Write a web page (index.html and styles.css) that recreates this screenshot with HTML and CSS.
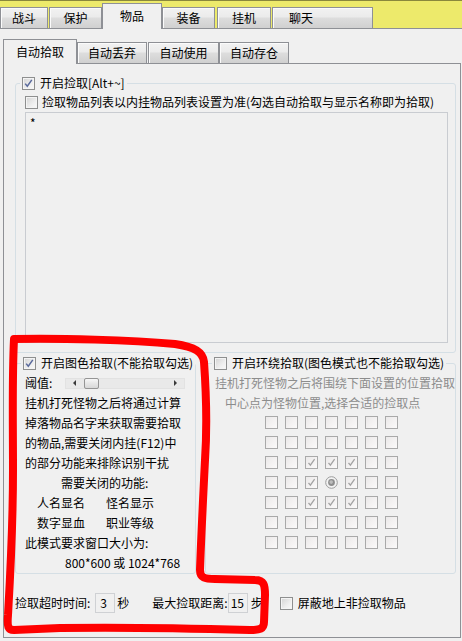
FILE: index.html
```html
<!DOCTYPE html>
<html lang="zh-CN">
<head>
<meta charset="utf-8">
<title>物品</title>
<link rel="stylesheet" href="styles.css">
</head>
<body>
<div class="tabbar">
  <div class="tab tab-fight">战斗</div>
  <div class="tab tab-guard">保护</div>
  <div class="tab tab-items active">物品</div>
  <div class="tab tab-equip">装备</div>
  <div class="tab tab-idle">挂机</div>
  <div class="tab tab-chat">聊天</div>
</div>

<div class="subtabs">
  <div class="stab stab-pick active">自动拾取</div>
  <div class="stab stab-drop">自动丢弃</div>
  <div class="stab stab-use">自动使用</div>
  <div class="stab stab-store">自动存仓</div>
</div>

<div class="subpage">
  <div class="group group-pick">
    <div class="legend legend-pick">
      <span class="cb on"><svg viewBox="0 0 13 13" width="13" height="13"><path d="M3.2 6.6 L5.3 9.3 L9.8 2.9" fill="none" stroke="#5a6a9c" stroke-width="1.5"/></svg></span>
      <span>开启捡取[Alt+~]</span>
    </div>
    <div class="row row-list">
      <span class="cb"></span>
      <span>捡取物品列表以内挂物品列表设置为准(勾选自动拾取与显示名称即为拾取)</span>
    </div>
    <div class="textbox">*</div>
  </div>

  <div class="groups">
    <div class="group group-color">
      <div class="legend legend-color">
        <span class="cb on"><svg viewBox="0 0 13 13" width="13" height="13"><path d="M3.2 6.6 L5.3 9.3 L9.8 2.9" fill="none" stroke="#5a6a9c" stroke-width="1.5"/></svg></span>
        <span>开启图色拾取(不能拾取勾选)</span>
      </div>
      <div class="line threshold">
        <span>阈值:</span>
        <div class="slider">
          <span class="arrow arrow-left"></span>
          <span class="thumb"></span>
          <span class="track"></span>
          <span class="arrow arrow-right"></span>
        </div>
      </div>
      <div class="line">挂机打死怪物之后将通过计算</div>
      <div class="line">掉落物品名字来获取需要拾取</div>
      <div class="line">的物品,需要关闭内挂(F12)中</div>
      <div class="line">的部分功能来排除识别干扰</div>
      <div class="line indent-need">需要关闭的功能:</div>
      <div class="line pair"><span>人名显名</span><span>怪名显示</span></div>
      <div class="line pair"><span>数字显血</span><span>职业等级</span></div>
      <div class="line">此模式要求窗口大小为:</div>
      <div class="line indent-size">800*600 或 1024*768</div>
    </div>

    <div class="group group-around">
      <div class="legend legend-around">
        <span class="cb"></span>
        <span>开启环绕拾取(图色模式也不能拾取勾选)</span>
      </div>
      <div class="line dis">挂机打死怪物之后将围绕下面设置的位置拾取</div>
      <div class="line dis indent-center">中心点为怪物位置,选择合适的捡取点</div>
      <div class="grid">
        <span class="gcb"></span><span class="gcb"></span><span class="gcb"></span><span class="gcb"></span><span class="gcb"></span><span class="gcb"></span><span class="gcb"></span>
        <span class="gcb"></span><span class="gcb"></span><span class="gcb"></span><span class="gcb"></span><span class="gcb"></span><span class="gcb"></span><span class="gcb"></span>
        <span class="gcb"></span><span class="gcb"></span>
        <span class="gcb"><svg viewBox="0 0 13 13" width="13" height="13"><path d="M3.5 6.8 L5.4 9.2 L9.6 3.2" fill="none" stroke="#a3a3a3" stroke-width="1.3"/></svg></span>
        <span class="gcb"><svg viewBox="0 0 13 13" width="13" height="13"><path d="M3.5 6.8 L5.4 9.2 L9.6 3.2" fill="none" stroke="#a3a3a3" stroke-width="1.3"/></svg></span>
        <span class="gcb"><svg viewBox="0 0 13 13" width="13" height="13"><path d="M3.5 6.8 L5.4 9.2 L9.6 3.2" fill="none" stroke="#a3a3a3" stroke-width="1.3"/></svg></span>
        <span class="gcb"></span><span class="gcb"></span>
        <span class="gcb"></span><span class="gcb"></span>
        <span class="gcb"><svg viewBox="0 0 13 13" width="13" height="13"><path d="M3.5 6.8 L5.4 9.2 L9.6 3.2" fill="none" stroke="#a3a3a3" stroke-width="1.3"/></svg></span>
        <span class="radio"><svg viewBox="0 0 13 13" width="13" height="13"><circle cx="6.5" cy="6.5" r="5.8" fill="#f3f3f3" stroke="#9c9c9c" stroke-width="1"/><circle cx="6.5" cy="6.5" r="3.4" fill="#8e8e8e"/><circle cx="6.2" cy="6.1" r="1.8" fill="#bdbdbd"/></svg></span>
        <span class="gcb"><svg viewBox="0 0 13 13" width="13" height="13"><path d="M3.5 6.8 L5.4 9.2 L9.6 3.2" fill="none" stroke="#a3a3a3" stroke-width="1.3"/></svg></span>
        <span class="gcb"></span><span class="gcb"></span>
        <span class="gcb"></span><span class="gcb"></span>
        <span class="gcb"><svg viewBox="0 0 13 13" width="13" height="13"><path d="M3.5 6.8 L5.4 9.2 L9.6 3.2" fill="none" stroke="#a3a3a3" stroke-width="1.3"/></svg></span>
        <span class="gcb"><svg viewBox="0 0 13 13" width="13" height="13"><path d="M3.5 6.8 L5.4 9.2 L9.6 3.2" fill="none" stroke="#a3a3a3" stroke-width="1.3"/></svg></span>
        <span class="gcb"><svg viewBox="0 0 13 13" width="13" height="13"><path d="M3.5 6.8 L5.4 9.2 L9.6 3.2" fill="none" stroke="#a3a3a3" stroke-width="1.3"/></svg></span>
        <span class="gcb"></span><span class="gcb"></span>
        <span class="gcb"></span><span class="gcb"></span><span class="gcb"></span><span class="gcb"></span><span class="gcb"></span><span class="gcb"></span><span class="gcb"></span>
        <span class="gcb"></span><span class="gcb"></span><span class="gcb"></span><span class="gcb"></span><span class="gcb"></span><span class="gcb"></span><span class="gcb"></span>
      </div>
    </div>
  </div>

  <div class="bottom">
    <span>捡取超时时间:</span>
    <span class="num num-time">3</span>
    <span class="unit">秒</span>
    <span class="dist-label">最大捡取距离:</span>
    <span class="num num-dist">15</span>
    <span class="unit unit-step">步</span>
    <span class="cb cb-hide"></span>
    <span class="hide-label">屏蔽地上非捡取物品</span>
  </div>
</div>

<svg class="scribble" viewBox="0 0 462 641" width="462" height="641">
  <path d="M14 339 C60 338 130 340 175 344 C195 347 203 352 204 362 C206 390 207 430 205 460 C203 500 201 540 200 570 C200 578 205 579 215 579 L255 580 C264 580 265 585 265 595 L264 622 C264 629 260 630 250 630 C180 628 120 627 60 628 L14 630 C8 630 7 627 8 615 C10 580 13 530 13 470 C13 420 12 380 14 339 Z" fill="none" stroke="#ff0000" stroke-width="8" stroke-linejoin="round" stroke-linecap="round"/>
</svg>
</body>
</html>
```

FILE: styles.css
```css
* { box-sizing: border-box; margin: 0; padding: 0; }

html, body { width: 462px; height: 641px; }

body {
  background: #f0f0f0;
  font-family: "Noto Sans CJK SC", "Microsoft YaHei", sans-serif;
  font-size: 12px;
  line-height: 16px;
  color: #000;
  position: relative;
  overflow: hidden;
}

/* ---- top tab strip ---- */
.tabbar {
  display: flex;
  align-items: flex-end;
  height: 29px;
  background: #edea6b;
  border-top: 1px solid #8a883c;
  border-bottom: 1px solid #8e9095;
}

.tab {
  height: 21px;
  display: flex;
  align-items: center;
  justify-content: center;
  border: 1px solid #8e9095;
  border-bottom: none;
  background: linear-gradient(#f2f2f2, #ebebeb 45%, #dddddd 50%, #d0d0d0);
  box-shadow: inset 1px 1px 0 #fbfbfb;
}

.tab.active {
  height: 26px;
  margin-bottom: -1px;
  padding-bottom: 2px;
  background: #f0f0f0;
  box-shadow: none;
  position: relative;
  z-index: 1;
}

.tab-fight { width: 48px; }
.tab-guard { width: 53px; margin-left: 1px; }
.tab-items { width: 60px; }
.tab-equip { width: 53px; }
.tab-idle  { width: 54px; margin-left: 2px; }
.tab-chat  { width: 101px; margin-left: 1px; justify-content: flex-start; padding-left: 16px; }

/* ---- sub tabs ---- */
.subtabs {
  display: flex;
  align-items: flex-end;
  height: 24px;
  margin: 10px 0 0 3px;
}

.stab {
  height: 21px;
  display: flex;
  align-items: center;
  justify-content: center;
  border: 1px solid #8e9095;
  border-bottom: none;
  background: linear-gradient(#f2f2f2, #ebebeb 45%, #dddddd 50%, #d0d0d0);
  box-shadow: inset 1px 1px 0 #fbfbfb;
}

.stab.active {
  height: 25px;
  margin-bottom: -1px;
  padding-bottom: 1px;
  background: #f0f0f0;
  box-shadow: none;
  position: relative;
  z-index: 1;
}

.stab-pick  { width: 74px; }
.stab-drop  { width: 70px; }
.stab-use   { width: 71px; margin-left: 1px; }
.stab-store { width: 70px; }

.subpage {
  width: 458px;
  height: 575px;
  margin-left: 3px;
  border: 1px solid #8e9095;
  padding: 0 4px 0 11px;
}

/* ---- group boxes ---- */
.group {
  border: 1px solid #d5dfe5;
  border-radius: 3px;
}

.legend {
  display: flex;
  align-items: center;
  gap: 5px;
  width: max-content;
  height: 16px;
  margin: -9px 0 0 4px;
  padding: 0 2px;
  background: #f0f0f0;
  white-space: nowrap;
}

.legend-color { margin-left: 5px; }
.legend-around { margin-left: 6px; }

.cb {
  display: block;
  flex: none;
  width: 13px;
  height: 13px;
  border: 1px solid #8e8f8f;
  background: linear-gradient(135deg, #d3d3d3, #eeeeee 60%, #fafafa);
  box-shadow: inset 0 0 0 1px #f4f4f4;
}

.cb svg {
  display: block;
  margin: -1px;
}

.group-pick {
  margin-top: 19px;
  padding-bottom: 9px;
}

.row {
  display: flex;
  align-items: center;
  gap: 4px;
  height: 16px;
  margin: 3px 0 0 9px;
  white-space: nowrap;
}

.textbox {
  height: 231px;
  margin: 2px 7px 0 9px;
  padding: 2px 4px;
  border: 1px solid #c9ccd1;
  background: #f0f0f0;
}

.groups {
  display: flex;
  gap: 9px;
  margin-top: 10px;
}

.group-color {
  width: 181px;
  height: 211px;
}

.group-around {
  width: 251px;
  height: 211px;
}

.line {
  height: 20px;
  line-height: 20px;
  padding-left: 9px;
  white-space: nowrap;
}

.threshold {
  margin-top: 2px;
  display: flex;
  align-items: center;
}

.group-around .legend + .line { margin-top: 2px; }

.dis { color: #8c8c8c; }

.indent-need { padding-left: 45px; }
.indent-size { padding-left: 49px; }
.indent-center { padding-left: 19px; }

.pair {
  display: flex;
  gap: 21px;
  padding-left: 21px;
}

/* slider */
.slider {
  display: flex;
  align-items: center;
  width: 120px;
  height: 11px;
  margin-left: 13px;
  background: #e9e9e9;
  border: 1px solid #e2e2e2;
}

.arrow {
  flex: none;
  width: 17px;
  height: 9px;
  display: flex;
  align-items: center;
  justify-content: center;
}

.arrow::before {
  content: "";
  display: block;
  border-top: 3px solid transparent;
  border-bottom: 3px solid transparent;
}

.arrow-left::before { border-right: 3px solid #3a3a3a; }
.arrow-right::before { border-left: 3px solid #3a3a3a; }

.thumb {
  flex: none;
  width: 15px;
  height: 11px;
  margin-left: 1px;
  border: 1px solid #959595;
  border-radius: 2px;
  background: linear-gradient(#f7f7f7, #e6e6e6 50%, #d8d8d8);
}

.track { flex: 1; }

/* grid of positions */
.grid {
  display: grid;
  grid-template-columns: repeat(7, 13px);
  grid-auto-rows: 13px;
  gap: 7px;
  margin: 3px 0 0 59px;
}

.gcb {
  display: block;
  width: 13px;
  height: 13px;
  border: 1px solid #a9a9a9;
  background: linear-gradient(135deg, #ebe9e9, #f4f2f2 55%, #fbfafa);
}

.gcb svg { display: block; margin: -1px; }

.radio { display: block; width: 13px; height: 13px; }
.radio svg { display: block; }

/* bottom row */
.bottom {
  display: flex;
  align-items: center;
  height: 20px;
  margin-top: 19px;
  white-space: nowrap;
}

.num {
  display: block;
  width: 20px;
  height: 20px;
  line-height: 18px;
  padding-left: 4px;
  border: 1px solid #cfd1d4;
  background: #f0f0f0;
}

.num-time { margin-left: 5px; }
.num-dist { padding-left: 2px; }

.unit { margin-left: 2px; }
.unit-step { margin-left: 3px; }
.dist-label { margin-left: 23px; }
.cb-hide { margin-left: 17px; }
.hide-label { margin-left: 5px; }

/* hand-drawn red annotation lying over the form */
.scribble {
  position: absolute;
  left: 0;
  top: 0;
  pointer-events: none;
}
```
